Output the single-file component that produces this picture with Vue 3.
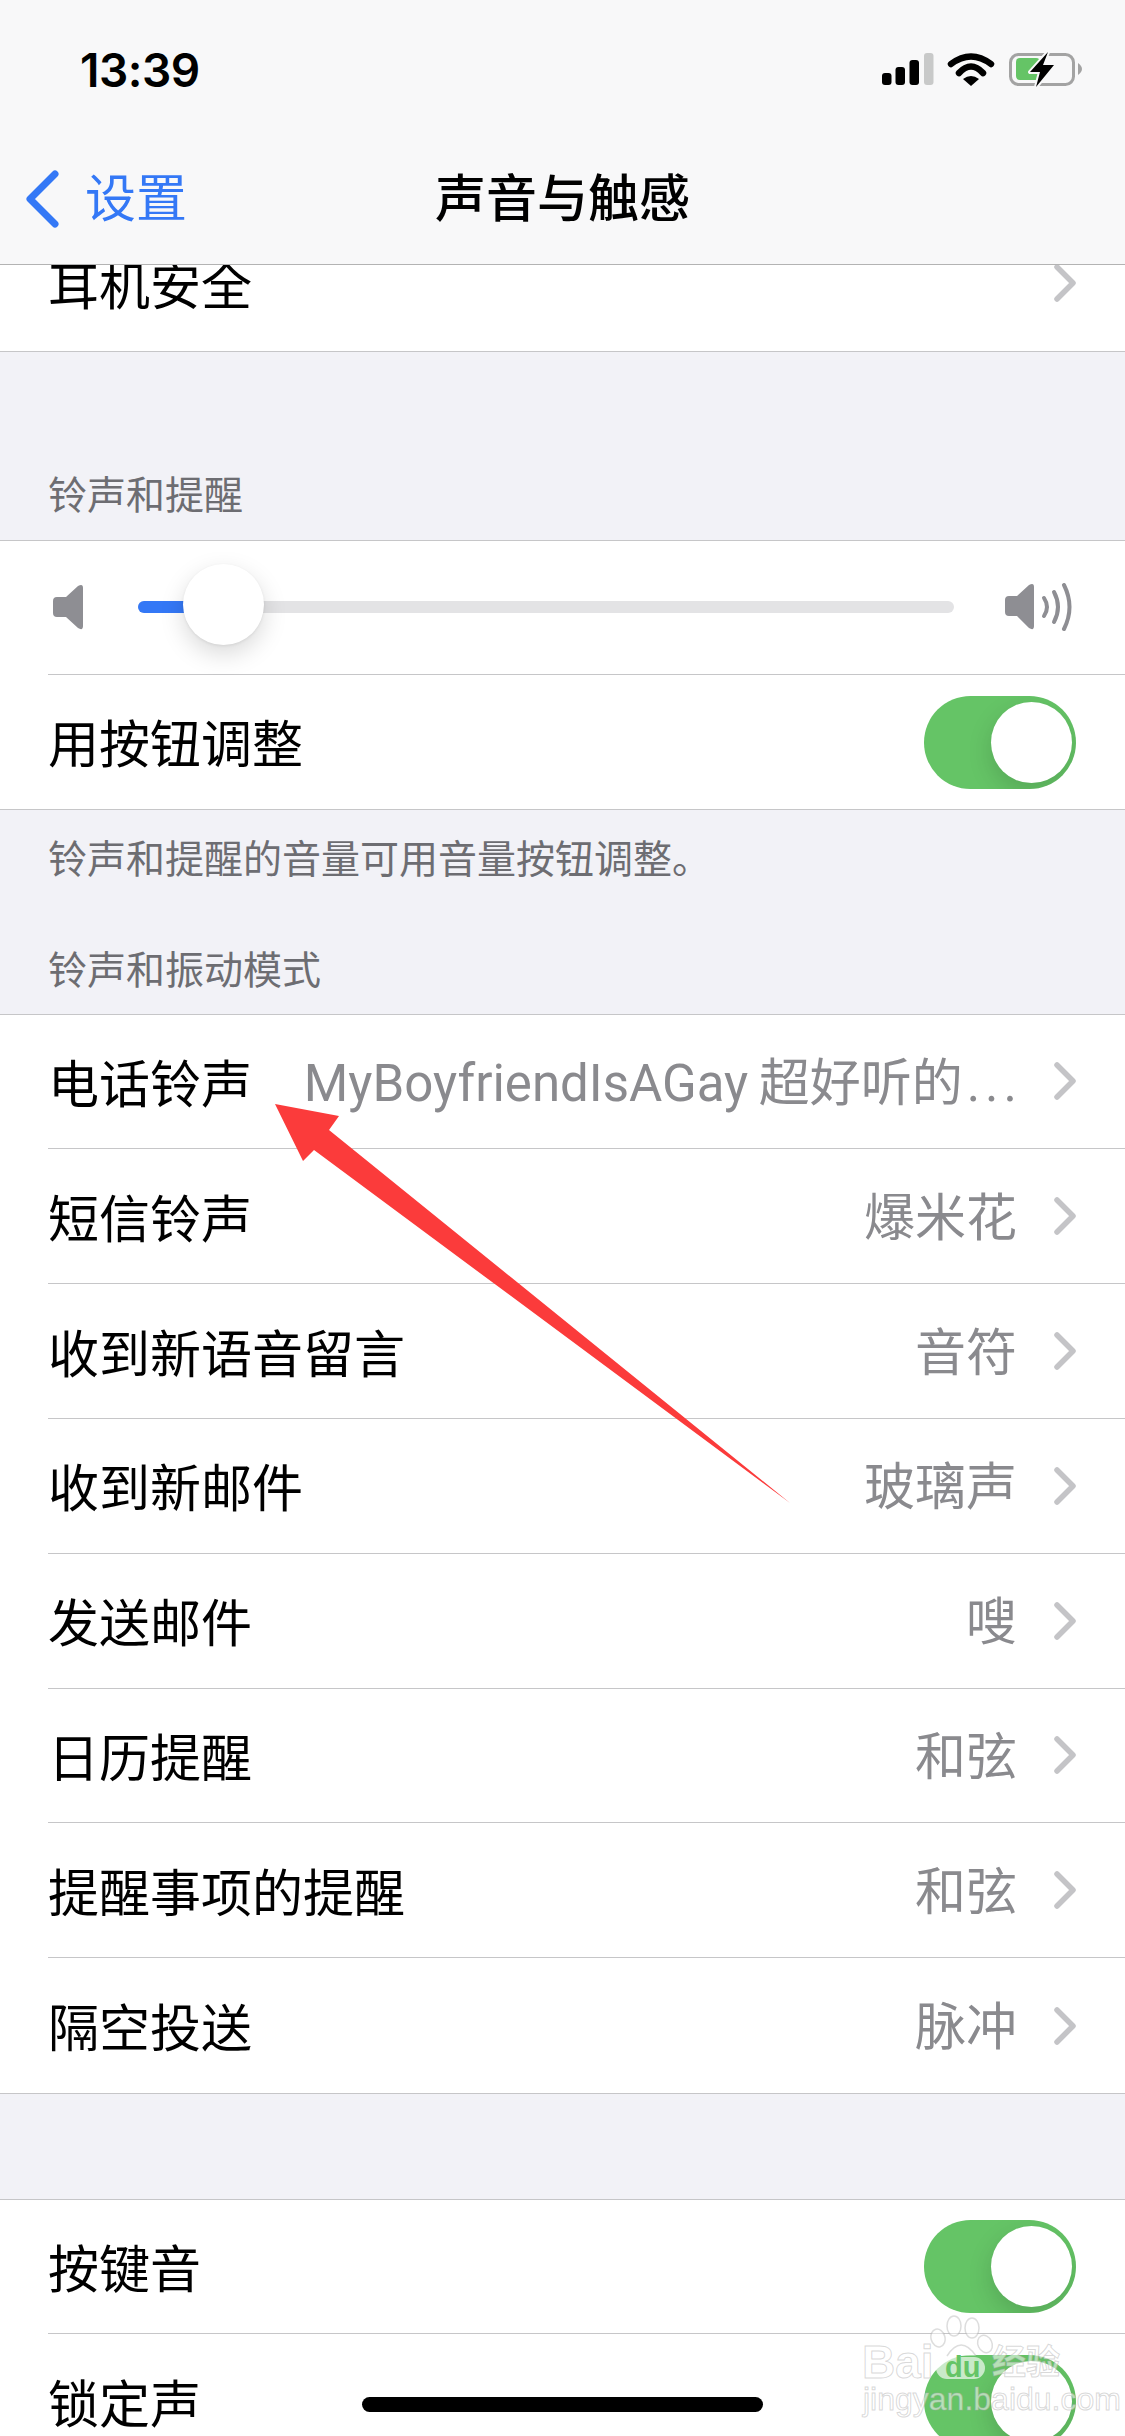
<template>
  <div class="page">
    <div class="scroll">
      <div class="group">
        <div class="row">
          <div class="row-inner last">
            <span class="label">耳机安全</span>
            <svg class="chev" width="22" height="38" viewBox="0 0 22 38"><path d="M3 3 L19 19 L3 35" /></svg>
          </div>
        </div>
      </div>

      <div class="sec-head first">铃声和提醒</div>
      <div class="group">
        <div class="row short">
          <div class="slider-row">
            <svg width="30" height="46" viewBox="53 584 30 46"><path class="spk" d="M57 597 H66 L78 586 Q83 583 83 588 V626 Q83 631 78 628 L66 617 H57 Q53 617 53 613 V601 Q53 597 57 597 Z" /></svg>
            <div class="track">
              <div class="track-fill"></div>
              <div class="thumb"></div>
            </div>
            <svg width="68" height="48" viewBox="1004 583 68 48">
              <path class="spk" d="M1009 596 H1017 L1029 585 Q1034 582 1034 587 V626 Q1034 631 1029 628 L1017 616 H1009 Q1005 616 1005 612 V600 Q1005 596 1009 596 Z" />
              <path class="wave" d="M1044 598 Q1050 607 1044 616" />
              <path class="wave" d="M1054 592 Q1062 607 1054 622" />
              <path class="wave" d="M1064 585 Q1075 607 1064 629" />
            </svg>
          </div>
        </div>
        <div class="row short">
          <div class="row-inner last">
            <span class="label">用按钮调整</span>
            <div class="toggle"><div class="knob"></div></div>
          </div>
        </div>
      </div>
      <div class="sec-foot">铃声和提醒的音量可用音量按钮调整。</div>

      <div class="sec-head second">铃声和振动模式</div>
      <div class="group">
        <div v-for="(item, i) in sounds" :key="item.label" class="row">
          <div class="row-inner" :class="{ last: i === sounds.length - 1 }">
            <span class="label">{{ item.label }}</span>
            <span class="value">{{ item.value }}<span v-if="item.tail" class="dots">{{ item.tail }}</span></span>
            <svg class="chev" width="22" height="38" viewBox="0 0 22 38"><path d="M3 3 L19 19 L3 35" /></svg>
          </div>
        </div>
      </div>

      <div class="gap"></div>
      <div class="group">
        <div class="row">
          <div class="row-inner">
            <span class="label">按键音</span>
            <div class="toggle"><div class="knob"></div></div>
          </div>
        </div>
        <div class="row">
          <div class="row-inner last">
            <span class="label">锁定声</span>
            <div class="toggle"><div class="knob"></div></div>
          </div>
        </div>
      </div>
    </div>

    <header class="nav">
      <div class="status">
        <span class="time">13:39</span>
        <svg width="200" height="36" viewBox="882 52 200 36">
          <rect x="882" y="73" width="9.5" height="12" rx="3" fill="#000" />
          <rect x="895.500" y="67" width="9.500" height="18" rx="3" fill="#000" />
          <rect x="909.500" y="60" width="9.500" height="25" rx="3" fill="#000" />
          <rect x="924" y="53" width="9.500" height="32" rx="3" fill="#c8c9c9" />
          <path d="M951 64 Q971 49 991 64" fill="none" stroke="#000" stroke-width="6.500" stroke-linecap="round" />
          <path d="M959 73 Q971 60 983 73" fill="none" stroke="#000" stroke-width="6.500" stroke-linecap="round" />
          <path d="M963 79 Q971 73 979 79 L971 86 Z" fill="#000" />
          <rect x="1010.500" y="54.500" width="63" height="30" rx="8" fill="none" stroke="#a3a3a3" stroke-width="3" />
          <path d="M1078 63 Q1082 66 1082 69 Q1082 72 1078 75 Z" fill="#a3a3a3" />
          <rect x="1016" y="58" width="24" height="22" rx="4" fill="#65c466" />
          <path d="M1048 52 L1030 72 H1040 L1036 87 L1054 65 H1043 Z" fill="#000" stroke="#f8f8f9" stroke-width="4" paint-order="stroke" stroke-linejoin="round" />
        </svg>
      </div>
      <div class="nav-bar">
        <div class="back">
          <svg width="36" height="60" viewBox="0 0 36 60"><path d="M31 5 L6 30 L31 55" /></svg>
          <span>设置</span>
        </div>
        <div class="nav-title">声音与触感</div>
      </div>
    </header>

    <svg class="arrow" width="1125" height="2436" viewBox="0 0 1125 2436">
      <polygon points="275,1104 339,1116 329,1130 790,1503 314,1150 303,1161" fill="#fb3b3b" />
    </svg>

    <div class="home"></div>

    <div class="mark">
      <svg class="paw" width="90" height="80" viewBox="930 2315 90 80">
        <ellipse cx="938" cy="2338" rx="7" ry="9" transform="rotate(-15 938 2338)" />
        <ellipse cx="954" cy="2326" rx="7" ry="10" />
        <ellipse cx="972" cy="2328" rx="7" ry="10" />
        <ellipse cx="985" cy="2344" rx="7" ry="9" transform="rotate(-25 985 2344)" />
        <path d="M947 2356 Q961 2334 976 2356" />
        <rect class="blob" x="936" y="2357" width="49" height="22" rx="11" />
      </svg>
      <span class="m-bai">Bai</span>
      <span class="m-du">du</span>
      <span class="m-jy">经验</span>
      <span class="m-url">jingyan.baidu.com</span>
    </div>
  </div>
</template>

<script setup>
const sounds = [
  { label: '电话铃声', value: 'MyBoyfriendIsAGay\u2009超好听的', tail: '...' },
  { label: '短信铃声', value: '爆米花' },
  { label: '收到新语音留言', value: '音符' },
  { label: '收到新邮件', value: '玻璃声' },
  { label: '发送邮件', value: '嗖' },
  { label: '日历提醒', value: '和弦' },
  { label: '提醒事项的提醒', value: '和弦' },
  { label: '隔空投送', value: '脉冲' },
]
</script>

<style>
html, body { margin: 0; background: #f2f2f7; }
</style>

<style scoped>
.page {
  position: relative; width: 1125px; height: 2436px; overflow: hidden;
  background: #f2f2f7; color: #000;
  font-family: Inter, "Noto Sans CJK SC", sans-serif;
}
.scroll { padding-top: 216px; }

.group { background: #fff; border-top: 1px solid #c6c6c8; border-bottom: 1px solid #c6c6c8; }
.group:first-child { border-top: none; }
.row { height: 134.800px; padding-left: 48px; box-sizing: border-box; }
.row.short { height: 134px; }
.row-inner {
  height: 100%; box-sizing: border-box; padding-right: 49px;
  display: flex; align-items: center; gap: 37px;
  border-bottom: 1px solid #c6c6c8;
}
.row-inner.last { border-bottom: none; }
.label { font-size: 51px; line-height: 60px; padding-top: 7px; white-space: nowrap; }
.value {
  margin-left: auto; padding-top: 5px; font-size: 51px; line-height: 60px; color: #8a8a8e;
  font-family: Roboto, "Noto Sans CJK SC", sans-serif; white-space: nowrap;
}
.dots { letter-spacing: 5px; margin-left: 4px; margin-right: -5px; }
.chev { flex: none; margin-left: auto; }
.value + .chev { margin-left: 0; }
.chev path { fill: none; stroke: #c4c4c7; stroke-width: 5.500; stroke-linecap: round; stroke-linejoin: round; }

.sec-head, .sec-foot { padding: 0 48px; font-size: 39px; line-height: 46px; color: #6d6d72; }
.sec-head { display: flex; align-items: flex-end; box-sizing: border-box; padding-bottom: 22px; }
.sec-head.first { height: 188.200px; }
.sec-head.second { height: 139.600px; padding-bottom: 21px; }
.sec-foot { height: 64px; padding-top: 26px; box-sizing: border-box; }
.gap { height: 104.600px; }

.slider-row {
  height: 100%; box-sizing: border-box; padding-left: 5px; padding-right: 53px;
  display: flex; align-items: center; gap: 50px;
  border-bottom: 1px solid #c6c6c8;
}
.spk { fill: #8e8e93; }
.wave { fill: none; stroke: #8e8e93; stroke-width: 4; stroke-linecap: round; }
.track {
  position: relative; flex: none; width: 816px; height: 12px; margin-left: 5px;
  background: #e3e3e5; border-radius: 6px;
}
.track-fill { width: 86px; height: 100%; background: #3478f6; border-radius: 6px 0 0 6px; }
.thumb {
  position: absolute; left: 45px; top: -37px; width: 81px; height: 81px;
  background: #fff; border-radius: 50%;
  box-shadow: 0 9px 24px rgba(0, 0, 0, .15), 0 1px 3px rgba(0, 0, 0, .08);
}

.toggle {
  position: relative; flex: none; margin-left: auto; width: 152px; height: 93px;
  background: #65c466; border-radius: 47px; overflow: hidden;
}
.short .toggle { margin-top: 2px; }
.knob {
  position: absolute; right: 4px; top: 6px; width: 81px; height: 81px;
  background: #fff; border-radius: 50%;
  box-shadow: 0 9px 24px rgba(0, 0, 0, .15);
}

.nav {
  position: absolute; left: 0; top: 0; width: 100%; height: 265px; box-sizing: border-box;
  background: #f8f8f9; border-bottom: 1px solid #b3b3b3;
}
.status {
  display: flex; justify-content: space-between; align-items: center;
  height: 36px; padding: 52px 43px 0 80px;
}
.time { font-size: 46px; line-height: 36px; font-weight: 600; letter-spacing: -0.5px; }
.nav-bar {
  display: grid; grid-template-columns: 1fr auto 1fr; align-items: center;
  height: 60px; margin-top: 81px; padding-left: 24px;
}
.back {
  display: flex; align-items: center; gap: 25px;
  font-size: 51px; line-height: 60px; color: #3478f6;
}
.back path { fill: none; stroke: #3478f6; stroke-width: 7; stroke-linecap: round; stroke-linejoin: round; }
.nav-title { font-size: 51px; line-height: 60px; font-weight: 500; margin-right: 24px; }

.arrow { position: absolute; left: 0; top: 0; pointer-events: none; }

.home {
  position: absolute; left: 362px; top: 2397px; width: 401px; height: 15px;
  background: #000; border-radius: 8px;
}

.mark { position: absolute; left: 0; top: 0; width: 100%; height: 100%; pointer-events: none; }
.paw { position: absolute; left: 930px; top: 2315px; }
.paw ellipse, .paw path { fill: rgba(255, 255, 255, .45); stroke: rgba(170, 170, 170, .4); stroke-width: 1.500; }
.paw .blob { fill: rgba(255, 255, 255, .65); }
.m-bai, .m-du, .m-jy, .m-url {
  position: absolute; white-space: nowrap;
  font-family: "Liberation Sans", "Noto Sans CJK SC", sans-serif;
  color: rgba(255, 255, 255, .55);
  -webkit-text-stroke: 1px rgba(170, 170, 170, .45);
}
.m-bai { left: 862px; top: 2344px; font-size: 46px; line-height: 36px; font-weight: 700; }
.m-du {
  left: 945px; top: 2353px; font-size: 29px; line-height: 28px; font-weight: 700;
  color: #65c466; -webkit-text-stroke: 0;
}
.m-jy { left: 992px; top: 2344px; font-size: 34px; line-height: 36px; font-weight: 700; }
.m-url { left: 863px; top: 2384px; font-size: 32px; line-height: 30px; }
</style>
